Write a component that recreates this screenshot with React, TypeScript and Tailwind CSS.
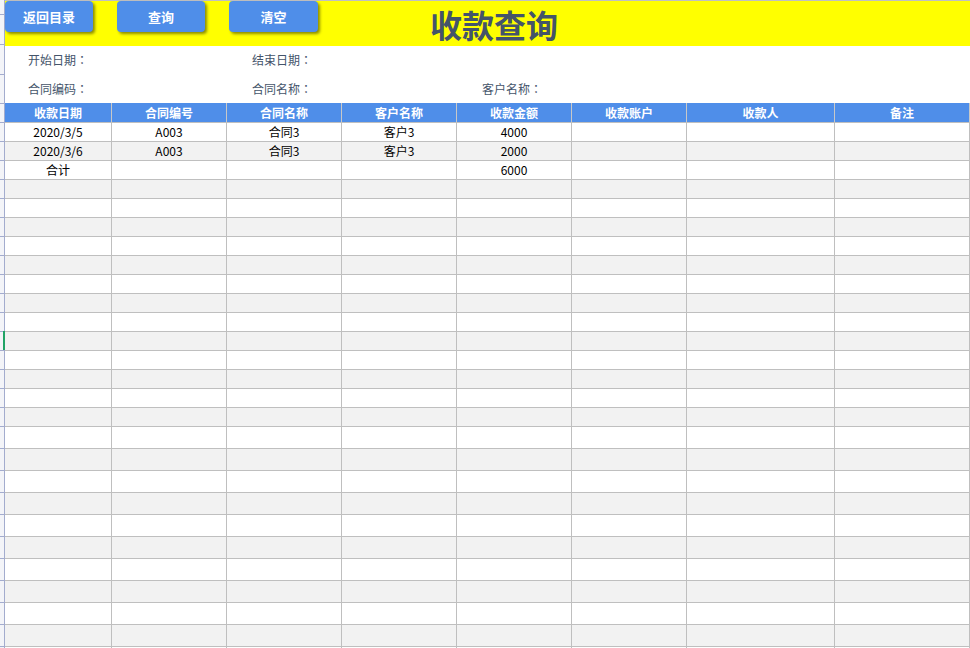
import React from "react";

const cols = [
  { title: "收款日期", w: "w-[107px]" },
  { title: "合同编号", w: "w-[115px]" },
  { title: "合同名称", w: "w-[115px]" },
  { title: "客户名称", w: "w-[115px]" },
  { title: "收款金额", w: "w-[115px]" },
  { title: "收款账户", w: "w-[115px]" },
  { title: "收款人", w: "w-[148px]" },
  { title: "备注", w: "flex-1" },
];

const data: string[][] = [
  ["2020/3/5", "A003", "合同3", "客户3", "4000", "", "", ""],
  ["2020/3/6", "A003", "合同3", "客户3", "2000", "", "", ""],
  ["合计", "", "", "", "6000", "", "", ""],
];

// 16 short rows, then taller ones
const rowHeights = [
  ...Array.from({ length: 16 }, () => "h-[19px]"),
  ...Array.from({ length: 11 }, () => "h-[22px]"),
];

const stripHeights = [
  "h-[15px]",
  "h-[30px]",
  "h-[30px]",
  "h-[29px]",
  "h-[19px]",
  ...rowHeights,
];

function Label({ text, w }: { text: string; w?: string }) {
  return (
    <span className={w}>
      {text}
      <span className="font-['Noto_Sans_CJK_JP']">：</span>
    </span>
  );
}

function App() {
  return (
    <div
      className="relative flex h-[648px] w-[970px] overflow-hidden bg-white"
      style={{ fontFamily: '"Noto Sans CJK SC", "Noto Sans", sans-serif' }}
    >
      {/* row header strip */}
      <div className="flex w-[5px] shrink-0 flex-col border-r border-[#a3acce] bg-[#f3f4f8]">
        {stripHeights.map((h, i) => (
          <div key={i} className={`${h} shrink-0 border-b border-[#a3acce]`}></div>
        ))}
      </div>
      <div className="absolute left-[3px] top-[331px] h-[19px] w-[2px] bg-[#21a366]"></div>

      <div className="flex min-w-0 flex-1 flex-col border-t border-[#c0c0c0]">
        {/* title band */}
        <div className="flex h-[45px] shrink-0 items-start bg-[#ffff00]">
          <div className="flex gap-[24px]">
            <button className="h-[31px] w-[88px] rounded-[4px] bg-[#4f8ee9] text-[13px] font-bold text-white shadow-[2px_2px_3px_rgba(0,0,0,0.45)]">
              返回目录
            </button>
            <button className="h-[31px] w-[88px] rounded-[4px] bg-[#4f8ee9] text-[13px] font-bold text-white shadow-[2px_2px_3px_rgba(0,0,0,0.45)]">
              查询
            </button>
            <button className="h-[31px] w-[89px] rounded-[4px] bg-[#4f8ee9] text-[13px] font-bold text-white shadow-[2px_2px_3px_rgba(0,0,0,0.45)]">
              清空
            </button>
          </div>
          <h1 className="ml-[112px] mt-[3px] text-[32px] font-bold leading-[40px] text-[#44546a]">
            收款查询
          </h1>
        </div>

        {/* filters */}
        <div className="flex h-[57px] shrink-0 flex-col pl-[23px] text-[12px] text-[#44546a]">
          <div className="flex h-[28px] items-center">
            <Label text="开始日期" w="w-[224px]" />
            <Label text="结束日期" />
          </div>
          <div className="flex h-[29px] items-center">
            <Label text="合同编码" w="w-[224px]" />
            <Label text="合同名称" w="w-[230px]" />
            <Label text="客户名称" />
          </div>
        </div>

        {/* table header */}
        <div className="flex h-[20px] shrink-0 border-b border-[#bfbfbf] bg-[#4f8ee9]">
          {cols.map((c) => (
            <div
              key={c.title}
              className={`${c.w} flex shrink-0 items-center justify-center border-r border-[#c8c8c8] text-[12px] font-bold text-white`}
            >
              {c.title}
            </div>
          ))}
        </div>

        {/* table body */}
        {rowHeights.map((h, r) => (
          <div
            key={r}
            className={`flex ${h} shrink-0 border-b border-[#bfbfbf] ${r % 2 === 1 ? "bg-[#f2f2f2]" : "bg-white"}`}
          >
            {cols.map((c, i) => (
              <div
                key={i}
                className={`${c.w} flex shrink-0 items-center justify-center border-r border-[#bfbfbf] text-[12px] text-black`}
              >
                {data[r] ? data[r][i] : ""}
              </div>
            ))}
          </div>
        ))}
      </div>
    </div>
  );
}

export default App;
